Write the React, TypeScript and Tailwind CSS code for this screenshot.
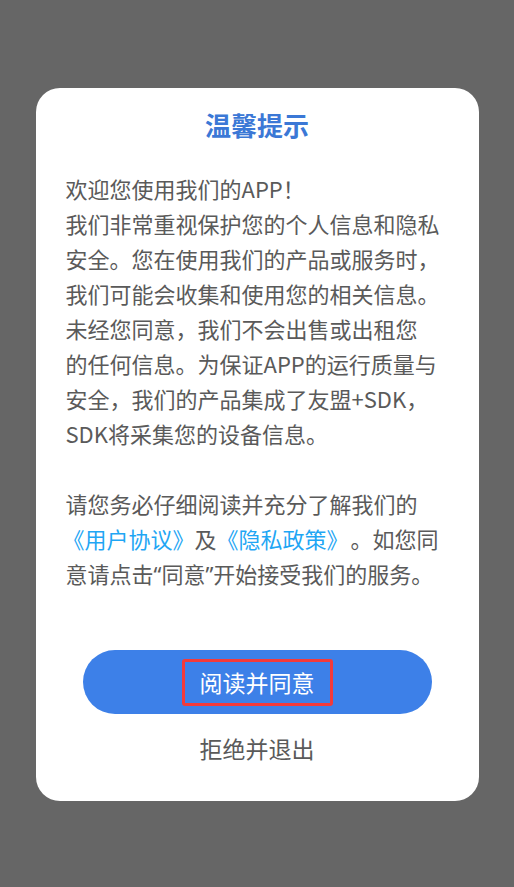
const BODY = [
  "欢迎您使用我们的APP！",
  "我们非常重视保护您的个人信息和隐私",
  "安全。您在使用我们的产品或服务时，",
  "我们可能会收集和使用您的相关信息。",
  "未经您同意，我们不会出售或出租您",
  "的任何信息。为保证APP的运行质量与",
  "安全，我们的产品集成了友盟+SDK，",
  "SDK将采集您的设备信息。",
];

export default function App() {
  return (
    <div
      className="flex h-[887px] w-full flex-col items-center bg-[#666666] pt-[88px]"
      style={{ fontFamily: '"Noto Sans CJK SC", "Noto Sans", sans-serif' }}
    >
      <div className="flex w-[443px] flex-col rounded-[24px] bg-white px-[30px] pb-[38px] pt-[19px]">
        <h1 className="text-center text-[26px] font-bold leading-[36px] text-[#3b78d6]">温馨提示</h1>

        <div className="mt-[28px] text-[22px] leading-[35px] text-[#5a5a5a] whitespace-nowrap">
          {BODY.map((line) => (
            <div key={line}>{line}</div>
          ))}
          <div className="h-[35px]" />
          <div>请您务必仔细阅读并充分了解我们的</div>
          <div className="-ml-[3px]">
            <span className="text-[#1fa6f4]">《用户协议》</span>及<span className="text-[#1fa6f4]">《隐私政策》</span>
            <span className="inline-block w-[2px]" />。如您同
          </div>
          <div>
            意请点击<span className="font-['Noto_Sans']">“</span>同意<span className="font-['Noto_Sans']">”</span>开始接受我们的服务。
          </div>
        </div>

        <button className="mx-auto mt-[58px] flex h-[64px] w-[349px] items-center justify-center rounded-full bg-[#3d80e8]">
          <span className="rounded-[3px] border-[3px] border-[#f43a3a] px-[15px] text-[23px] leading-[41px] text-white">
            阅读并同意
          </span>
        </button>

        <div className="mt-[19px] text-center text-[23px] leading-[30px] text-[#5a5a5a]">拒绝并退出</div>
      </div>
    </div>
  );
}
